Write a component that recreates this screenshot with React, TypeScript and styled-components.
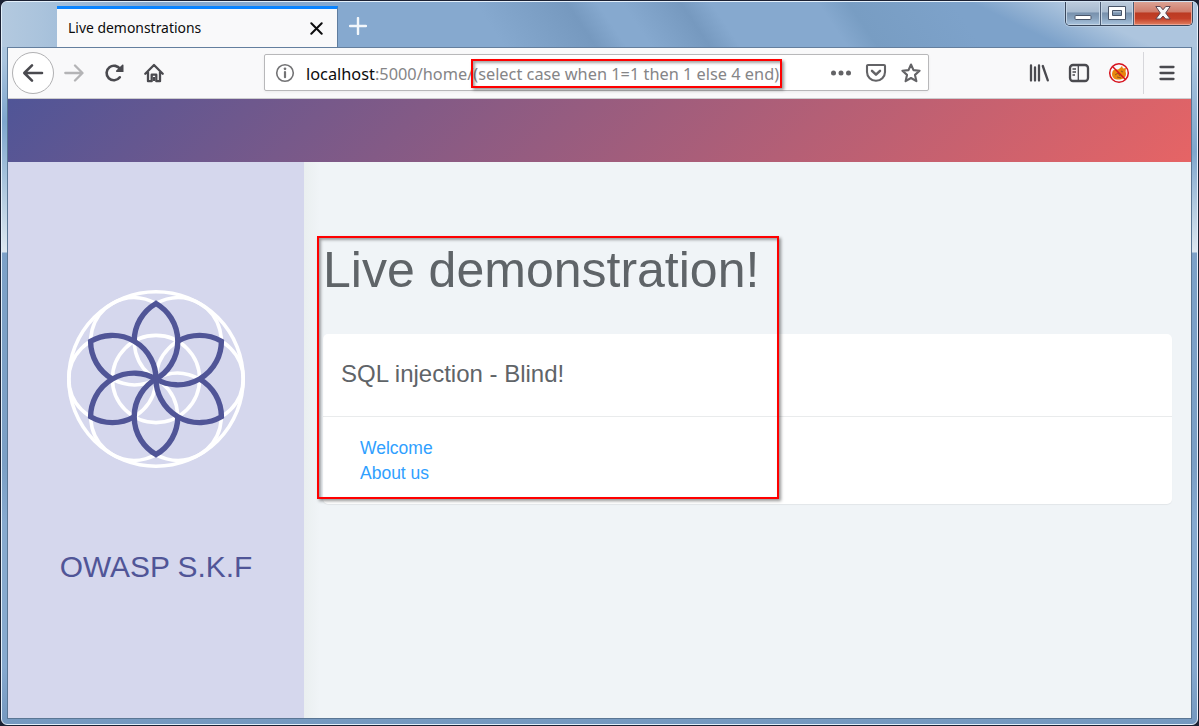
import React from "react";
import styled, { createGlobalStyle } from "styled-components";

const Global = createGlobalStyle`
  * { box-sizing: border-box; }
  body { margin: 0; background: #fff; font-family: "Liberation Sans", Arial, sans-serif; overflow: hidden; }
  h1, h2, ul { margin: 0; padding: 0; font-weight: 400; list-style: none; }
  svg { display: block; flex: none; }
`;

const Window = styled.div`
  position: relative;
  width: 1199px;
  height: 726px;
  background: #1b2133;
  padding: 1px;
`;

const Frame = styled.div`
  height: 724px;
  border: 1px solid #e4f0fb;
  border-radius: 6px;
  display: flex;
  flex-direction: column;
  padding: 0 5px 5px;
  background:
    linear-gradient(180deg, #b3cae0 0, #a9c4de 60px, #7ea6cd 120px, #b8cee2 200px, #dde7f0 250px, transparent 251px) 0 0 / 6px 100% no-repeat,
    linear-gradient(180deg, #a9c4de 0, #a9c4de 60px, #7ea6cd 150px, #b8cee2 210px, #dde7f0 250px, transparent 251px) 100% 0 / 6px 100% no-repeat,
    linear-gradient(180deg, #7ea3cb 0, #7b9fc5 64%, #86a9cf 72%, #86a9cf 92%, #7598bf 100%);
`;

const TitleBar = styled.header`
  height: 45px;
  margin: 0 -5px;
  padding-left: 55px;
  display: flex;
  align-items: flex-start;
  border-radius: 5px 5px 0 0;
  background:
    linear-gradient(90deg, #b3c9df 0, #aac3dc 40px, transparent 150px),
    linear-gradient(26deg, transparent 465px, #adc5de 505px),
    linear-gradient(56deg, #86a9cf 0 41%, #7699bf 48.5%, #86a9cf 51% 53%, #7699bf 57.8%, #86a9cf 60.3% 69%, #789dc3 71.5%, #7da2ca 80%, #7da2ca 92%, #7a9ec5 100%);
`;

const Tab = styled.div`
  width: 281px;
  height: 41px;
  margin-top: 4px;
  padding: 0 14px 0 11px;
  display: flex;
  align-items: center;
  justify-content: space-between;
  background: #f9f9fa;
  border-top: 3px solid #0a84ff;
  border-right: 1px solid #5f7d9f;
  font: 14.5px "Noto Sans", sans-serif;
  color: #0c0c0d;
`;

const TabTitle = styled.span`
  display: inline-block;
  padding-bottom: 2px;
  font-size: 14px;
  transform-origin: 0 50%;
  transform: scaleX(0.995);
  white-space: nowrap;
`;

const NewTab = styled.div`
  padding: 15px 0 0 11px;
`;

const Controls = styled.div`
  margin-left: auto;
  margin-right: 4px;
  display: flex;
  height: 24px;
  border: 1px solid #39475c;
  border-top: 0;
  border-radius: 0 0 5px 5px;
  overflow: hidden;
  box-shadow: 0 0 0 1px #c4d7ea88;
`;

const Control = styled.div<{ $w: number; $close?: boolean }>`
  width: ${(p) => p.$w}px;
  display: flex;
  align-items: center;
  justify-content: center;
  border: 1px solid ${(p) => (p.$close ? "#e9a393" : "#c5d5e5")};
  border-top: 0;
  background: ${(p) =>
    p.$close
      ? "linear-gradient(#dba294 0, #cf7c6b 45%, #bb3a22 50%, #c43f27 75%, #dc7658 100%)"
      : "linear-gradient(#bccbdc 0, #a7bacf 45%, #7891ad 50%, #88a2bd 75%, #a5c0da 100%)"};
  & + & { box-shadow: -1px 0 0 #4b5c74; margin-left: 1px; }
`;

const Client = styled.div`
  flex: 1;
  display: flex;
  flex-direction: column;
  border: 1px solid #5a7694;
  border-top-color: #647f9e;
  background: #f0f4f7;
  min-height: 0;
`;

const Toolbar = styled.nav`
  flex: none;
  height: 51px;
  display: flex;
  align-items: center;
  padding: 0 0 1px 4px;
  background: #f9f9fa;
  border-bottom: 1px solid #ccccce;
`;

const BackButton = styled.div`
  width: 42px;
  height: 42px;
  border: 1px solid #b1b1b3;
  border-radius: 50%;
  background: #fff;
  display: flex;
  align-items: center;
  justify-content: center;
`;

const NavIcons = styled.div`
  display: flex;
  gap: 20px;
  margin-left: 10px;
  width: 200px;
`;

const UrlBar = styled.div`
  width: 665px;
  height: 37px;
  padding: 0 6px 0 10px;
  display: flex;
  align-items: center;
  background: #fff;
  border: 1px solid #b8b8ba;
  border-radius: 2px;
  box-shadow: 0 1px 3px rgba(0, 0, 0, 0.06);
`;

const Url = styled.span`
  flex: 1;
  margin-left: 11px;
  padding-top: 2px;
  font: 16px "Noto Sans", sans-serif;
  color: #858587;
  white-space: nowrap;
  b { font-weight: 400; color: #0c0c0d; }
`;

const UrlText = styled.span`
  display: inline-block;
  transform-origin: 0 50%;
  transform: scaleX(1.02);
`;

const UrlIcons = styled.div`
  display: flex;
  align-items: center;
  gap: 13px;
`;

const ToolIcons = styled.div`
  display: flex;
  align-items: center;
  gap: 18px;
  margin-left: 99px;
  height: 42px;
`;

const MenuSlot = styled.div`
  height: 42px;
  padding-left: 13px;
  margin-left: -5px;
  border-left: 1px solid #d7d7db;
  display: flex;
  align-items: center;
`;

const Banner = styled.div`
  flex: none;
  height: 63px;
  background: linear-gradient(135deg, #505597 0%, #e66465 100%);
`;

const Page = styled.div`
  flex: 1;
  display: flex;
  min-height: 0;
`;

const Sidebar = styled.aside`
  width: 296px;
  background: #d5d7ed;
  display: flex;
  flex-direction: column;
  align-items: center;
  padding-top: 127px;
`;

const Brand = styled.div`
  margin-top: 78px;
  font-size: 29.9px;
  line-height: 40px;
  color: #505597;
  white-space: nowrap;
`;

const Main = styled.main`
  flex: 1;
  padding: 77px 19px 0 19px;
  background: linear-gradient(90deg, #eaeff0 0, #f0f4f7 16px);
  color: #5f6468;
`;

const Heading = styled.h1`
  font-size: 50px;
  line-height: 62px;
  white-space: nowrap;
`;

const Card = styled.section`
  margin-top: 33px;
  height: 170px;
  background: #fff;
  border-radius: 5px;
  box-shadow: 0 1px 1px rgba(0, 0, 0, 0.06);
`;

const CardTitle = styled.h2`
  height: 83px;
  padding: 0 18px 2px;
  display: flex;
  align-items: center;
  font-size: 24px;
  border-bottom: 1px solid #e9ebec;
`;

const Links = styled.ul`
  padding: 19px 37px;
  font-size: 17.5px;
  line-height: 25px;
  color: #309fff;
`;

const Highlight = styled.div<{ $x: number; $y: number; $w: number; $h: number }>`
  position: absolute;
  left: ${(p) => p.$x}px;
  top: ${(p) => p.$y}px;
  width: ${(p) => p.$w}px;
  height: ${(p) => p.$h}px;
  border: 2px solid #ff0000;
  box-shadow: 2px 2px 3px rgba(0, 0, 0, 0.42), inset 2px 2px 3px rgba(0, 0, 0, 0.36);
`;

const line = { fill: "none", stroke: "#4a4a4f", strokeWidth: 2.3, strokeLinecap: "round", strokeLinejoin: "round" } as const;

const R = 43.6;
const TIP = R * Math.sqrt(3);

const Logo = () => (
  <svg width="180" height="180" viewBox="-90 -90 180 180" fill="none">
    <g stroke="#fff" strokeWidth="3.6">
      <circle r={R * 2} />
      <circle r={R} />
      {[0, 60, 120, 180, 240, 300].map((a) => (
        <circle key={a} r={R} cy={-R} transform={`rotate(${a + 30})`} />
      ))}
    </g>
    <g stroke="#505597" strokeWidth="5.4">
      {[0, 60, 120, 180, 240, 300].map((a) => (
        <path
          key={a}
          transform={`rotate(${a})`}
          d={`M0 0A${R} ${R} 0 0 0 0 ${-TIP}A${R} ${R} 0 0 0 ${-R / 2} ${-TIP / 2}`}
        />
      ))}
    </g>
  </svg>
);

export default function App() {
  return (
    <Window>
      <Global />
      <Frame>
        <TitleBar>
          <Tab>
            <TabTitle>Live demonstrations</TabTitle>
            <svg width="13" height="13" viewBox="0 0 13 13"><path d="M1.3 1.3l10.4 10.4M11.7 1.3L1.3 11.7" stroke="#0c0c0d" strokeWidth="2" strokeLinecap="round" /></svg>
          </Tab>
          <NewTab>
            <svg width="18" height="18" viewBox="0 0 18 18"><path d="M9 1v16M1 9h16" stroke="#f3f7fb" strokeWidth="2.400" strokeLinecap="round" /></svg>
          </NewTab>
          <Controls>
            <Control $w={34}>
              <svg width="18" height="20" viewBox="0 0 18 20"><rect x="1" y="12.5" width="16" height="4" rx="1" fill="#fff" stroke="#485468" /></svg>
            </Control>
            <Control $w={32}>
              <svg width="18" height="16" viewBox="0 0 18 16"><path fillRule="evenodd" d="M.5 1.500h17v13H.5zM4.500 5.500h9v5h-9z" fill="#fff" stroke="#485468" /></svg>
            </Control>
            <Control $w={58} $close>
              <svg width="16" height="16" viewBox="0 0 16 16"><path d="M.8 1.500h4.500L8 4.800l2.700-3.300h4.500L10.700 8l4.500 6h-4.500L8 11l-2.700 3H.8l4.500-6z" fill="#f8f8f8" stroke="#5b4552" strokeLinejoin="round" /></svg>
            </Control>
          </Controls>
        </TitleBar>
        <Client>
          <Toolbar>
            <BackButton>
              <svg width="22" height="20" viewBox="0 0 22 20"><path {...line} strokeWidth={2.6} d="M20 10H2.500M10 2.300L2.300 10l7.700 7.700" /></svg>
            </BackButton>
            <NavIcons>
              <svg width="20" height="20" viewBox="0 0 20 20"><path {...line} stroke="#b4b4b6" d="M1.300 10h17M11 2.500l7.500 7.500-7.500 7.500" /></svg>
              <svg width="20" height="20" viewBox="0 0 20 20"><path {...line} strokeWidth={2.6} d="M15.800 14.300A7.300 7.300 0 1 1 16.300 6.500" /><path d="M18.500 1.500a.8.800 0 0 1 1 .8V9h-6.700a.8.800 0 0 1-.6-1.400z" fill="#4a4a4f" /></svg>
              <svg width="20" height="20" viewBox="0 0 20 20"><path {...line} d="M1.300 10.700L10 2l8.700 8.700M4 9.500v8.700h3.700v-6.500h4.600v6.500H16V9.500" /><path d="M9 14h2v4H9z" fill="#4a4a4f" /></svg>
            </NavIcons>
            <UrlBar>
              <svg width="20" height="20" viewBox="0 0 20 20"><circle cx="10" cy="10" r="8.300" fill="none" stroke="#737375" strokeWidth="1.600" /><path d="M10 9v5.200" stroke="#737375" strokeWidth="2.200" strokeLinecap="round" /><circle cx="10" cy="5.800" r="1.350" fill="#737375" /></svg>
              <Url><UrlText><b>localhost</b>:5000/home/(select case when 1=1 then 1 else 4 end)</UrlText></Url>
              <UrlIcons>
                <svg width="22" height="20" viewBox="0 0 22 20" fill="#636366"><circle cx="3.500" cy="10" r="2.500" /><circle cx="11" cy="10" r="2.500" /><circle cx="18.500" cy="10" r="2.500" /></svg>
                <svg width="22" height="20" viewBox="0 0 22 20"><path {...line} stroke="#636366" strokeWidth={2.1} d="M3 2h16a1 1 0 0 1 1 1v6a9 8.800 0 0 1-18 0V3a1 1 0 0 1 1-1z" /><path {...line} stroke="#636366" strokeWidth={2.5} d="M7 7.800l4 3.900 4-3.900" /></svg>
                <svg width="22" height="20" viewBox="0 0 20 20"><path {...line} stroke="#636366" strokeWidth={2.1} d="M10 1.500l2.500 5.600 6.100.6-4.600 4.200 1.400 6.300L10 15l-5.400 3.200L6 11.900 1.400 7.700l6.100-.6z" /></svg>
              </UrlIcons>
            </UrlBar>
            <ToolIcons>
              <svg width="22" height="20" viewBox="0 0 22 20"><path {...line} d="M3 2.500v15M7 4.500v13M11 2.500v15M14.800 3l5 14.300" /></svg>
              <svg width="22" height="20" viewBox="0 0 22 20"><rect x="2" y="2" width="18" height="16" rx="3" fill="none" stroke="#4a4a4f" strokeWidth="2.300" /><path d="M10.300 2v16M4.500 6h3.500M4.500 9h3.500M4.500 12h2.500" stroke="#4a4a4f" strokeWidth="1.300" /></svg>
              <svg width="22" height="22" viewBox="0 0 22 22"><path d="M4.500 9.500C6 6.500 9 8 10.500 7.200 12 6.300 13 5 14 4l1 2.500 3-.5-.5 3.500c1 2.500.5 5-1.500 6.500-3 2-8 2-10 .5-2-1.700-2.500-4-1.500-7z" fill="#e8850d" /><path d="M7 13l3-2 2 3M13 9l2 1M9 15l4 1" stroke="#8d5922" fill="none" /><circle cx="11" cy="11" r="9.300" fill="none" stroke="#d7121d" strokeWidth="1.500" /><path d="M4.500 4.500l13 13" stroke="#d7121d" strokeWidth="1.500" /></svg>
              <MenuSlot>
                <svg width="20" height="20" viewBox="0 0 20 20"><path {...line} d="M3.500 4h13M3.500 10h13M3.500 16h13" /></svg>
              </MenuSlot>
            </ToolIcons>
          </Toolbar>
          <Banner />
          <Page>
            <Sidebar>
              <Logo />
              <Brand>OWASP S.K.F</Brand>
            </Sidebar>
            <Main>
              <Heading>Live demonstration!</Heading>
              <Card>
                <CardTitle>SQL injection - Blind!</CardTitle>
                <Links>
                  <li>Welcome</li>
                  <li>About us</li>
                </Links>
              </Card>
            </Main>
          </Page>
        </Client>
      </Frame>
      <Highlight $x={471} $y={59} $w={311} $h={29} />
      <Highlight $x={317} $y={236} $w={462} $h={263} />
    </Window>
  );
}
